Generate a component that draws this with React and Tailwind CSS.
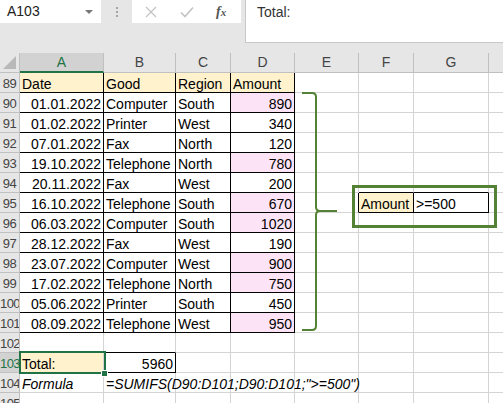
import React from "react";

const cols = [
  { key: "A", w: "w-[84px]" },
  { key: "B", w: "w-[72px]" },
  { key: "C", w: "w-[55px]" },
  { key: "D", w: "w-[64px]" },
  { key: "E", w: "w-[64px]" },
  { key: "F", w: "w-[55px]" },
  { key: "G", w: "w-[75px]" },
  { key: "H", w: "w-[40px]" },
];

const data = [
  ["01.01.2022", "Computer", "South", 890],
  ["01.02.2022", "Printer", "West", 340],
  ["07.01.2022", "Fax", "North", 120],
  ["19.10.2022", "Telephone", "North", 780],
  ["20.11.2022", "Fax", "West", 200],
  ["16.10.2022", "Telephone", "South", 670],
  ["06.03.2022", "Computer", "South", 1020],
  ["28.12.2022", "Fax", "West", 190],
  ["23.07.2022", "Computer", "West", 900],
  ["17.02.2022", "Telephone", "North", 750],
  ["05.06.2022", "Printer", "South", 450],
  ["08.09.2022", "Telephone", "West", 950],
];

// builds the cell map for rows 89..105
function buildRows() {
  const rows = [];
  for (let r = 89; r <= 105; r++) {
    const cells = {};
    if (r === 89) {
      ["Date", "Good", "Region", "Amount"].forEach((t, i) => {
        cells["ABCD"[i]] = { text: t, fill: "bg-[#fff2cc]", black: true };
      });
    } else if (r >= 90 && r <= 101) {
      const d = data[r - 90];
      cells.A = { text: d[0], right: true, black: true };
      cells.B = { text: d[1], black: true };
      cells.C = { text: d[2], black: true };
      cells.D = {
        text: String(d[3]),
        right: true,
        black: true,
        fill: d[3] >= 500 ? "bg-[#fce4f6]" : "",
      };
    }
    if (r === 94) {
      cells.F = { bottomBlack: true };
      cells.G = { bottomBlack: true };
    }
    if (r === 95) {
      cells.E = { rightBlack: true };
      cells.F = { text: "Amount", fill: "bg-[#fff2cc]", black: true };
      cells.G = { text: ">=500", black: true };
    }
    if (r === 102) cells.B = { bottomBlack: true };
    if (r === 103) {
      cells.A = { text: "Total:", fill: "bg-[#fff2cc]", selected: true };
      cells.B = { text: "5960", right: true, black: true };
    }
    if (r === 104) {
      cells.A = { text: "Formula", italic: true };
      cells.B = { text: '=SUMIFS(D90:D101;D90:D101;">=500")', italic: true, overflow: true };
    }
    rows.push({ n: r, cells });
  }
  return rows;
}

function Cell({ col, cell }) {
  const c = cell || {};
  const rb = c.black || c.rightBlack ? "border-r-black" : "border-r-[#d4d4d4]";
  const bb = c.black || c.bottomBlack ? "border-b-black" : "border-b-[#d4d4d4]";
  const open = c.overflow || c.selected;
  return (
    <div
      className={`relative h-[20px] shrink-0 border-r border-b ${rb} ${bb} ${col.w} ${c.fill || ""} ${
        open ? "overflow-visible z-10" : "overflow-hidden"
      }`}
    >
      {c.text && (
        <div
          className={`px-[2px] pt-[1px] leading-[20px] whitespace-nowrap ${c.right ? "text-right" : ""} ${
            c.italic ? "italic" : ""
          }`}
        >
          {c.text}
        </div>
      )}
      {c.selected && (
        <>
          <div className="absolute left-[-1px] top-[-2px] w-[87px] h-[23px] box-border border-2 border-solid border-[#217346] pointer-events-none" />
          <div className="absolute left-[81px] top-[17px] w-[7px] h-[7px] box-border bg-[#217346] border border-solid border-white" />
        </>
      )}
    </div>
  );
}

function FormulaBar() {
  return (
    <div className="flex items-start h-[53px] bg-[#e6e6e6]">
      <div className="w-[101px] h-[23px] bg-white flex items-center justify-between pl-[7px] pr-[8px] text-[14px] text-[#222]">
        <span>A103</span>
        <span className="w-0 h-0 border-l-[4px] border-r-[4px] border-t-[4px] border-l-transparent border-r-transparent border-t-[#777]" />
      </div>
      <div className="w-[31px] h-[23px] flex flex-col items-center justify-center gap-[2px]">
        <span className="w-[2px] h-[2px] bg-[#a6a6a6]" />
        <span className="w-[2px] h-[2px] bg-[#a6a6a6]" />
        <span className="w-[2px] h-[2px] bg-[#a6a6a6]" />
      </div>
      <div className="w-[109px] h-[23px] bg-white flex items-center">
        <svg width="12" height="12" viewBox="0 0 12 12" className="ml-[13px]">
          <path d="M1 1 L11 11 M11 1 L1 11" stroke="#c3c3c3" strokeWidth="1.3" fill="none" />
        </svg>
        <svg width="14" height="12" viewBox="0 0 14 12" className="ml-[23px]">
          <path d="M1 6.5 L5 10.5 L13 1.5" stroke="#c3c3c3" strokeWidth="1.6" fill="none" />
        </svg>
        <span className="ml-[22px] italic font-bold text-[14px] text-[#555]" style={{ fontFamily: "'Liberation Serif', serif" }}>
          f<span className="text-[11px]">x</span>
        </span>
      </div>
      <div className="ml-[4px] flex-1 h-[43px] bg-white border-l border-b border-[#c8c8c8] pl-[11px] pt-[2px] text-[14px] text-[#333]">
        Total:
      </div>
    </div>
  );
}

export default function App() {
  const rows = buildRows();
  return (
    <div
      className="relative w-[503px] h-[403px] overflow-hidden bg-white text-[14px] text-black"
      style={{ fontFamily: "'Liberation Sans', Arial, sans-serif" }}
    >
      <FormulaBar />

      <div className="flex h-[20px] bg-[#e6e6e6]">
        <div className="relative w-[20px] h-[20px] shrink-0 border-r border-b border-[#c0c0c0]">
          <svg width="20" height="20" className="absolute left-0 top-0">
            <polygon points="16,3 16,16 3,16" fill="#b9b9b9" />
          </svg>
        </div>
        {cols.map((c) => (
          <div
            key={c.key}
            className={`h-[20px] shrink-0 ${c.w} flex items-center justify-center border-r ${
              c.key === "A"
                ? "bg-[#d2d2d2] text-[#217346] border-b-2 border-b-[#217346] border-r-[#c0c0c0]"
                : "text-[#444] border-b border-[#c0c0c0]"
            }`}
          >
            {c.key === "H" ? "" : c.key}
          </div>
        ))}
      </div>

      {rows.map((row) => (
        <div key={row.n} className="flex h-[20px]">
          <div
            className={`w-[20px] h-[20px] shrink-0 border-r border-b border-[#c0c0c0] text-[13px] tracking-[-0.6px] pt-[1px] leading-[20px] text-center overflow-hidden ${
              row.n === 103 ? "bg-[#d2d2d2] text-[#217346]" : "bg-[#e6e6e6] text-[#444]"
            }`}
          >
            {row.n}
          </div>
          {cols.map((c) => (
            <Cell key={c.key} col={c} cell={row.cells[c.key]} />
          ))}
        </div>
      ))}

      {/* brace pointing at the criteria range */}
      <svg width="503" height="403" className="absolute left-0 top-0 pointer-events-none">
        <path
          d="M302 93 L312 93 Q316 93 316 97 L316 207 Q316 211 320 211 L337 211 M320 211 Q316 211 316 215 L316 326 Q316 330 312 330 L302 330"
          stroke="#548235"
          strokeWidth="2"
          fill="none"
        />
      </svg>

      <div className="absolute left-[352px] top-[185px] w-[145px] h-[43px] border-[3px] border-[#548235] pointer-events-none" />
    </div>
  );
}
